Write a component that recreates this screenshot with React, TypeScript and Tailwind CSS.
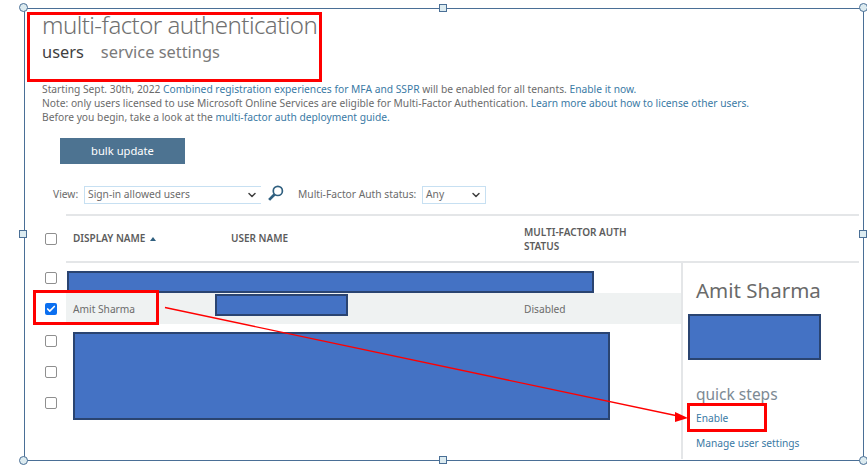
import React from "react";
import { Check, ChevronDown } from "lucide-react";

const font = { fontFamily: '"Noto Sans", sans-serif' };

function Box({ checked = false }: { checked?: boolean }) {
  if (checked) {
    return (
      <div className="w-[12px] h-[12px] rounded-[2px] bg-[#0b6ff0] flex items-center justify-center">
        <Check size={10} strokeWidth={4} color="#ffffff" />
      </div>
    );
  }
  return <div className="w-[12px] h-[12px] rounded-[2px] border border-[#8f8f8f] bg-white" />;
}

function Row({ checked = false, className = "h-[31px]", children }: { checked?: boolean; className?: string; children?: React.ReactNode }) {
  return (
    <div className={"flex items-center " + className}>
      <div className="w-[41px] pl-[20px] flex items-center">
        <Box checked={checked} />
      </div>
      <div className={checked ? "flex-1 h-full flex items-center bg-[#eff2f2]" : "flex-1 h-full flex items-center"}>{children}</div>
    </div>
  );
}

function Handle({ className, round = false }: { className: string; round?: boolean }) {
  return (
    <div
      className={
        "absolute border border-[#4a6f96] bg-[#dcebf0] " +
        (round ? "w-[9px] h-[9px] rounded-full " : "w-[8px] h-[8px] ") +
        className
      }
    />
  );
}

export default function App() {
  return (
    <div className="relative w-[867px] h-[469px] overflow-hidden bg-white text-[#6b6b6b]" style={font}>
      {/* Page */}
      <div className="pt-[10px] pl-[42px]">
        <div className="text-[24px] leading-[30px] tracking-[-0.55px] font-light text-[#707070] whitespace-nowrap">multi-factor authentication</div>
        <div className="flex gap-[17px] text-[16.4px] leading-[22px] mt-[1px] whitespace-nowrap">
          <span className="text-[#3f3f3f]">users</span>
          <span className="text-[#7a7a7a]">service settings</span>
        </div>

        <div className="mt-[19px] text-[10.25px] leading-[14px] whitespace-nowrap">
          <div>
            Starting Sept. 30th, 2022 <span className="text-[#3a7aa5]">Combined registration experiences for MFA and SSPR</span> will be enabled for all tenants. <span className="text-[#3a7aa5]">Enable it now.</span>
          </div>
          <div>
            Note: only users licensed to use Microsoft Online Services are eligible for Multi-Factor Authentication. <span className="text-[#3a7aa5]">Learn more about how to license other users.</span>
          </div>
          <div>
            Before you begin, take a look at the <span className="text-[#3a7aa5]">multi-factor auth deployment guide.</span>
          </div>
        </div>

        <div className="ml-[18px] mt-[14px] w-[125px] h-[26px] bg-[#4d7391] text-white text-[11.2px] flex items-center justify-center">bulk update</div>

        <div className="flex items-center mt-[22px] ml-[11px] text-[10.25px] h-[18px] whitespace-nowrap">
          <span className="w-[31px]">View:</span>
          <div className="w-[177px] h-[18px] border-y border-l border-[#c7e0f2] pl-[3px] pr-[3px] flex items-center justify-between">
            <span>Sign-in allowed users</span>
            <ChevronDown size={12} strokeWidth={3} color="#404040" />
          </div>
          <svg className="ml-[6px] -mt-[4px]" width="17" height="17" viewBox="0 0 16 16" fill="none" stroke="#2f5f7f">
            <circle cx="10.2" cy="5.6" r="4.3" strokeWidth="1.6" />
            <line x1="7" y1="9" x2="2" y2="14" strokeWidth="2.6" />
          </svg>
          <span className="ml-[14px] w-[124px]">Multi-Factor Auth status:</span>
          <div className="w-[64px] h-[18px] border border-[#c7e0f2] pl-[3px] pr-[3px] flex items-center justify-between">
            <span>Any</span>
            <ChevronDown size={12} strokeWidth={3} color="#404040" />
          </div>
        </div>
      </div>

      {/* Table */}
      <div className="ml-[25px] mr-[8px] mt-[10px]">
        <div className="ml-[41px] border-t-2 border-[#e4e6e8]" />
        <div className="flex items-center h-[45px] text-[10px] font-semibold text-[#5c5c5c]">
          <div className="w-[48px] pl-[20px]">
            <Box />
          </div>
          <div className="w-[158px] flex items-center gap-[5px]">
            DISPLAY NAME
            <span className="w-0 h-0 border-x-[3.5px] border-x-transparent border-b-[4px] border-b-[#2f5f7f]" />
          </div>
          <div className="w-[293px]">USER NAME</div>
          <div className="leading-[14px]">
            MULTI-FACTOR AUTH
            <br />
            STATUS
          </div>
        </div>
        <div className="ml-[41px] border-t-2 border-[#e4e6e8]" />
        <div className="flex h-[196px]">
          <div className="w-[658px] border-r-2 border-[#e4e6e8] text-[10.2px]">
            <Row className="h-[30px]" />
            <Row checked>
              <span className="ml-[7px] mt-[2px] w-[451px]">Amit Sharma</span>
              <span className="mt-[2px]">Disabled</span>
            </Row>
            <Row className="h-[31px] mt-[1px]" />
            <Row />
            <Row />
          </div>
          <div className="pl-[13px] pt-[12px]">
            <div className="text-[20.5px] leading-[30px] text-[#6a6a6a] whitespace-nowrap">Amit Sharma</div>
            <div className="text-[15.5px] leading-[22px] mt-[78px] text-[#7d8a94] whitespace-nowrap">quick steps</div>
            <div className="text-[10.2px] leading-[14px] mt-[6px] text-[#3a7aa5]">Enable</div>
            <div className="text-[10.2px] leading-[14px] mt-[11px] text-[#3a7aa5] whitespace-nowrap">Manage user settings</div>
          </div>
        </div>
      </div>

      {/* Redaction blocks */}
      <div className="absolute left-[67px] top-[271px] w-[527px] h-[22px] bg-[#4472c4] border-2 border-[#2a4471]" />
      <div className="absolute left-[215px] top-[294px] w-[133px] h-[22px] bg-[#4472c4] border-2 border-[#2a4471]" />
      <div className="absolute left-[73px] top-[332px] w-[537px] h-[88px] bg-[#4472c4] border-2 border-[#2a4471]" />
      <div className="absolute left-[688px] top-[314px] w-[133px] h-[46px] bg-[#4472c4] border-2 border-[#2a4471]" />

      {/* Red callouts */}
      <div className="absolute left-[27px] top-[12px] w-[295px] h-[70px] border-[3px] border-[#ff0000]" />
      <div className="absolute left-[33px] top-[290px] w-[126px] h-[35px] border-[3px] border-[#ff0000]" />
      <div className="absolute left-[687px] top-[403px] w-[80px] h-[29px] border-[3px] border-[#ff0000]" />
      <svg className="absolute left-0 top-0" width="867" height="469" viewBox="0 0 867 469" fill="none">
        <line x1="165" y1="307.500" x2="678" y2="416" stroke="#ff0000" strokeWidth="1.300" />
        <polygon points="688,418 675,412 675,422" fill="#ff0000" />
      </svg>

      {/* Selection frame */}
      <div className="absolute left-[24px] top-[8px] w-[840px] h-[453px] border border-[#4a6f96]" />
      <Handle round className="left-[19px] top-[3px]" />
      <Handle className="left-[439px] top-[4px]" />
      <Handle round className="left-[859px] top-[3px]" />
      <Handle className="left-[19px] top-[230px]" />
      <Handle className="left-[859px] top-[230px]" />
      <Handle round className="left-[19px] top-[456px]" />
      <Handle className="left-[439px] top-[456px]" />
      <Handle round className="left-[859px] top-[456px]" />
    </div>
  );
}
